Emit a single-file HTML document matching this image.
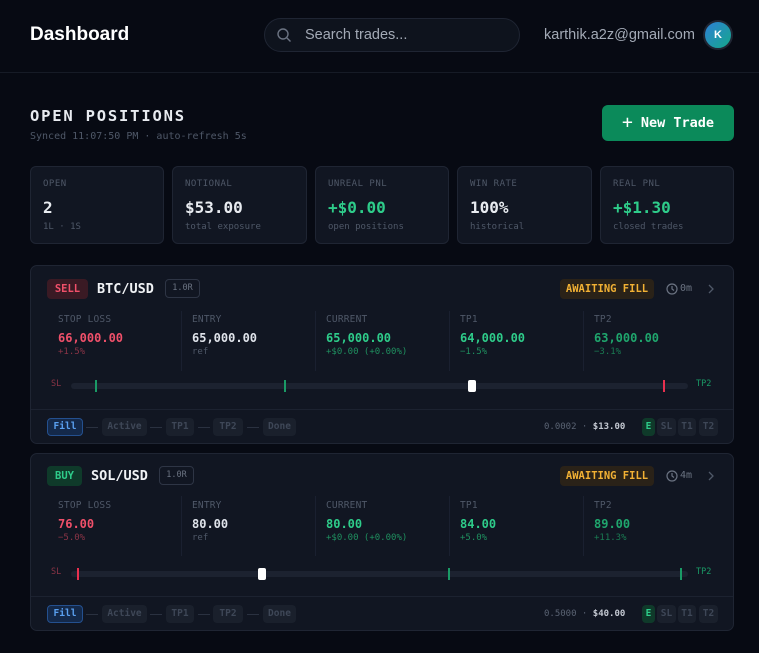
<!DOCTYPE html>
<html><head><meta charset="utf-8"><style>
*{box-sizing:border-box;margin:0;padding:0}
body{width:759px;height:653px;background:#070a13;color:#e6e9ef;font-family:"Liberation Sans",sans-serif;position:relative;overflow:hidden}
.m{font-family:"DejaVu Sans Mono","Liberation Mono",monospace}
.a{position:absolute;white-space:nowrap}
.hdr{position:absolute;left:0;top:0;width:759px;height:73px;border-bottom:1px solid #161b26}
.stat{position:absolute;top:166px;height:78px;background:#111622;border:1px solid #1f2533;border-radius:6px}
.stat .l{position:absolute;left:12px;top:12px;font-size:9px;color:#4f5868;letter-spacing:.5px}
.stat .v{position:absolute;left:12px;top:31px;font-size:16px;font-weight:bold;color:#e8ebf0}
.stat .s{position:absolute;left:12px;top:55px;font-size:9px;color:#4f5868}
.card{position:absolute;left:30px;width:704px;background:#111622;border:1px solid #1f2533;border-radius:7px}
.card .a{position:absolute}
.lab{font-size:9.5px;color:#4f5868;letter-spacing:.2px}
.val{font-size:12px;font-weight:bold}
.sub{font-size:9px}
.sep{position:absolute;width:1px;height:60px;background:#1a2030}
.pill{position:absolute;height:18px;border-radius:4px;background:#1a202c;color:#3e4757;font-size:9.5px;font-weight:bold;text-align:center;line-height:18px}
.dash{position:absolute;width:12px;height:1px;background:#2a3140}
.tk{position:absolute;width:2px;height:12px}
</style></head><body>
<div class="hdr"></div>
<div class="a" style="left:30px;top:24px;font-size:19px;font-weight:bold;color:#fff">Dashboard</div>
<div class="a" style="left:264px;top:18px;width:256px;height:34px;border:1px solid #1f2533;background:#0e131d;border-radius:17px"></div>
<svg class="a" style="left:276px;top:27px" width="16" height="16" viewBox="0 0 16 16"><circle cx="7" cy="7" r="5" fill="none" stroke="#6b7382" stroke-width="1.4"/><path d="M11 11l3.5 3.5" stroke="#6b7382" stroke-width="1.4"/></svg>
<div class="a" style="left:305px;top:27px;font-size:14.5px;color:#a3aab6">Search trades...</div>
<div class="a" style="left:544px;top:27px;font-size:14.5px;color:#a3aab6">karthik.a2z@gmail.com</div>
<div class="a" style="left:703px;top:20px;width:30px;height:30px;border-radius:50%;background:linear-gradient(135deg,#2e7fd6,#14a88a);border:2px solid #1f2533;color:#fff;font-size:11px;font-weight:bold;text-align:center;line-height:26px">K</div>

<div class="a m" style="left:30px;top:107px;font-size:15.5px;font-weight:bold;letter-spacing:1.8px;color:#e8ebf0">OPEN POSITIONS</div>
<div class="a m" style="left:30px;top:131px;font-size:10px;color:#4f5868">Synced 11:07:50 PM · auto-refresh 5s</div>
<div class="a m" style="left:602px;top:105px;width:132px;height:36px;background:#0b8a5a;border-radius:6px;color:#fff;font-size:13.5px;font-weight:bold;line-height:36px;text-align:center"><span style="font-weight:normal;font-size:18px;vertical-align:-1px">+</span> New Trade</div>

<div class="stat m" style="left:30px;width:134px"><div class="l">OPEN</div><div class="v">2</div><div class="s">1L · 1S</div></div>
<div class="stat m" style="left:172px;width:135px"><div class="l">NOTIONAL</div><div class="v">$53.00</div><div class="s">total exposure</div></div>
<div class="stat m" style="left:315px;width:134px"><div class="l">UNREAL PNL</div><div class="v" style="color:#2ecc8a">+$0.00</div><div class="s">open positions</div></div>
<div class="stat m" style="left:457px;width:135px"><div class="l">WIN RATE</div><div class="v">100%</div><div class="s">historical</div></div>
<div class="stat m" style="left:600px;width:134px"><div class="l">REAL PNL</div><div class="v" style="color:#2ecc8a">+$1.30</div><div class="s">closed trades</div></div>

<!-- card 1 -->
<div class="card m" style="top:265px;height:179px">
<div class="a" style="left:16px;top:13px;width:41px;height:20px;border-radius:4px;background:#3a1a24;color:#f0506a;font-size:10.5px;font-weight:bold;text-align:center;line-height:20px">SELL</div>
<div class="a" style="left:66px;top:15px;font-size:13.5px;font-weight:bold;color:#f0f2f5">BTC/USD</div>
<div class="a" style="left:134px;top:13px;width:35px;height:19px;border:1px solid #2e3545;border-radius:4px;color:#6b7382;font-size:8.5px;text-align:center;line-height:17px">1.0R</div>
<div class="a" style="left:529px;top:13px;width:94px;height:20px;border-radius:4px;background:#2a2218;color:#f2b134;font-size:10.5px;font-weight:bold;text-align:center;line-height:20px">AWAITING FILL</div>
<svg class="a" style="left:635px;top:17px" width="12" height="12" viewBox="0 0 12 12"><circle cx="6" cy="6" r="5" fill="none" stroke="#6b7382" stroke-width="1.2"/><path d="M6 3v3l2 1.5" fill="none" stroke="#6b7382" stroke-width="1.2"/></svg>
<div class="a" style="left:649px;top:17px;font-size:10px;color:#6b7382">0m</div>
<svg class="a" style="left:676px;top:17px" width="8" height="12" viewBox="0 0 8 12"><path d="M2 2l4 4-4 4" fill="none" stroke="#4f5868" stroke-width="1.3"/></svg>
<div class="sep" style="left:150px;top:45px"></div><div class="sep" style="left:284px;top:45px"></div><div class="sep" style="left:418px;top:45px"></div><div class="sep" style="left:552px;top:45px"></div>
<div class="a lab" style="left:27px;top:48px">STOP LOSS</div><div class="a val" style="left:27px;top:65px;color:#f0506a">66,000.00</div><div class="a sub" style="left:27px;top:81px;color:#8a3446">+1.5%</div>
<div class="a lab" style="left:161px;top:48px">ENTRY</div><div class="a val" style="left:161px;top:65px;color:#dfe3ea">65,000.00</div><div class="a sub" style="left:161px;top:81px;color:#4f5868">ref</div>
<div class="a lab" style="left:295px;top:48px">CURRENT</div><div class="a val" style="left:295px;top:65px;color:#2ecc8a">65,000.00</div><div class="a sub" style="left:295px;top:81px;color:#1f8f5f">+$0.00 (+0.00%)</div>
<div class="a lab" style="left:429px;top:48px">TP1</div><div class="a val" style="left:429px;top:65px;color:#2ecc8a">64,000.00</div><div class="a sub" style="left:429px;top:81px;color:#1f8f5f">−1.5%</div>
<div class="a lab" style="left:563px;top:48px">TP2</div><div class="a val" style="left:563px;top:65px;color:#1fa66d">63,000.00</div><div class="a sub" style="left:563px;top:81px;color:#1a7a52">−3.1%</div>
<div class="a" style="left:20px;top:113px;font-size:8.5px;color:#8a3446">SL</div>
<div class="a" style="left:40px;top:117px;width:617px;height:6px;border-radius:3px;background:#1c2230"></div>
<div class="tk" style="left:64px;top:114px;background:#1a9a66"></div>
<div class="tk" style="left:253px;top:114px;background:#1a9a66"></div>
<div class="a" style="left:437px;top:114px;width:8px;height:12px;border-radius:2px;background:#fff"></div>
<div class="tk" style="left:632px;top:114px;background:#e8304f"></div>
<div class="a" style="left:665px;top:113px;font-size:8.5px;color:#1a9a66">TP2</div>
<div class="a" style="left:0;top:143px;width:702px;height:1px;background:#1c2230"></div>
<div class="pill" style="left:16px;top:152px;width:36px;background:#14294a;border:1px solid #24508f;color:#5aa0f0;line-height:16px">Fill</div>
<div class="dash" style="left:55px;top:161px"></div>
<div class="pill" style="left:71px;top:152px;width:45px">Active</div>
<div class="dash" style="left:119px;top:161px"></div>
<div class="pill" style="left:135px;top:152px;width:28px">TP1</div>
<div class="dash" style="left:167px;top:161px"></div>
<div class="pill" style="left:182px;top:152px;width:30px">TP2</div>
<div class="dash" style="left:216px;top:161px"></div>
<div class="pill" style="left:232px;top:152px;width:33px">Done</div>
<div class="a" style="left:513px;top:156px;font-size:9px;color:#5a6373">0.0002 · <span style="color:#c3c8d1;font-weight:bold">$13.00</span></div>
<div class="pill" style="left:611px;top:152px;width:13px;background:#0f3a2a;color:#2ecc8a">E</div>
<div class="pill" style="left:626px;top:152px;width:19px">SL</div>
<div class="pill" style="left:647px;top:152px;width:18px">T1</div>
<div class="pill" style="left:668px;top:152px;width:19px">T2</div>
</div>

<!-- card 2 -->
<div class="card m" style="top:453px;height:178px">
<div class="a" style="left:16px;top:12px;width:35px;height:20px;border-radius:4px;background:#0f3a2a;color:#2ecc8a;font-size:10.5px;font-weight:bold;text-align:center;line-height:20px">BUY</div>
<div class="a" style="left:60px;top:14px;font-size:13.5px;font-weight:bold;color:#f0f2f5">SOL/USD</div>
<div class="a" style="left:128px;top:12px;width:35px;height:19px;border:1px solid #2e3545;border-radius:4px;color:#6b7382;font-size:8.5px;text-align:center;line-height:17px">1.0R</div>
<div class="a" style="left:529px;top:12px;width:94px;height:20px;border-radius:4px;background:#2a2218;color:#f2b134;font-size:10.5px;font-weight:bold;text-align:center;line-height:20px">AWAITING FILL</div>
<svg class="a" style="left:635px;top:16px" width="12" height="12" viewBox="0 0 12 12"><circle cx="6" cy="6" r="5" fill="none" stroke="#6b7382" stroke-width="1.2"/><path d="M6 3v3l2 1.5" fill="none" stroke="#6b7382" stroke-width="1.2"/></svg>
<div class="a" style="left:649px;top:16px;font-size:10px;color:#6b7382">4m</div>
<svg class="a" style="left:676px;top:16px" width="8" height="12" viewBox="0 0 8 12"><path d="M2 2l4 4-4 4" fill="none" stroke="#4f5868" stroke-width="1.3"/></svg>
<div class="sep" style="left:150px;top:42px"></div><div class="sep" style="left:284px;top:42px"></div><div class="sep" style="left:418px;top:42px"></div><div class="sep" style="left:552px;top:42px"></div>
<div class="a lab" style="left:27px;top:46px">STOP LOSS</div><div class="a val" style="left:27px;top:63px;color:#f0506a">76.00</div><div class="a sub" style="left:27px;top:79px;color:#8a3446">−5.0%</div>
<div class="a lab" style="left:161px;top:46px">ENTRY</div><div class="a val" style="left:161px;top:63px;color:#dfe3ea">80.00</div><div class="a sub" style="left:161px;top:79px;color:#4f5868">ref</div>
<div class="a lab" style="left:295px;top:46px">CURRENT</div><div class="a val" style="left:295px;top:63px;color:#2ecc8a">80.00</div><div class="a sub" style="left:295px;top:79px;color:#1f8f5f">+$0.00 (+0.00%)</div>
<div class="a lab" style="left:429px;top:46px">TP1</div><div class="a val" style="left:429px;top:63px;color:#2ecc8a">84.00</div><div class="a sub" style="left:429px;top:79px;color:#1f8f5f">+5.0%</div>
<div class="a lab" style="left:563px;top:46px">TP2</div><div class="a val" style="left:563px;top:63px;color:#1fa66d">89.00</div><div class="a sub" style="left:563px;top:79px;color:#1a7a52">+11.3%</div>
<div class="a" style="left:20px;top:113px;font-size:8.5px;color:#8a3446">SL</div>
<div class="a" style="left:40px;top:117px;width:617px;height:6px;border-radius:3px;background:#1c2230"></div>
<div class="tk" style="left:46px;top:114px;background:#e8304f"></div>
<div class="a" style="left:227px;top:114px;width:8px;height:12px;border-radius:2px;background:#fff"></div>
<div class="tk" style="left:417px;top:114px;background:#1a9a66"></div>
<div class="tk" style="left:649px;top:114px;background:#1a9a66"></div>
<div class="a" style="left:665px;top:113px;font-size:8.5px;color:#1a9a66">TP2</div>
<div class="a" style="left:0;top:142px;width:702px;height:1px;background:#1c2230"></div>
<div class="pill" style="left:16px;top:151px;width:36px;background:#14294a;border:1px solid #24508f;color:#5aa0f0;line-height:16px">Fill</div>
<div class="dash" style="left:55px;top:160px"></div>
<div class="pill" style="left:71px;top:151px;width:45px">Active</div>
<div class="dash" style="left:119px;top:160px"></div>
<div class="pill" style="left:135px;top:151px;width:28px">TP1</div>
<div class="dash" style="left:167px;top:160px"></div>
<div class="pill" style="left:182px;top:151px;width:30px">TP2</div>
<div class="dash" style="left:216px;top:160px"></div>
<div class="pill" style="left:232px;top:151px;width:33px">Done</div>
<div class="a" style="left:513px;top:155px;font-size:9px;color:#5a6373">0.5000 · <span style="color:#c3c8d1;font-weight:bold">$40.00</span></div>
<div class="pill" style="left:611px;top:151px;width:13px;background:#0f3a2a;color:#2ecc8a">E</div>
<div class="pill" style="left:626px;top:151px;width:19px">SL</div>
<div class="pill" style="left:647px;top:151px;width:18px">T1</div>
<div class="pill" style="left:668px;top:151px;width:19px">T2</div>
</div>
</body></html>
